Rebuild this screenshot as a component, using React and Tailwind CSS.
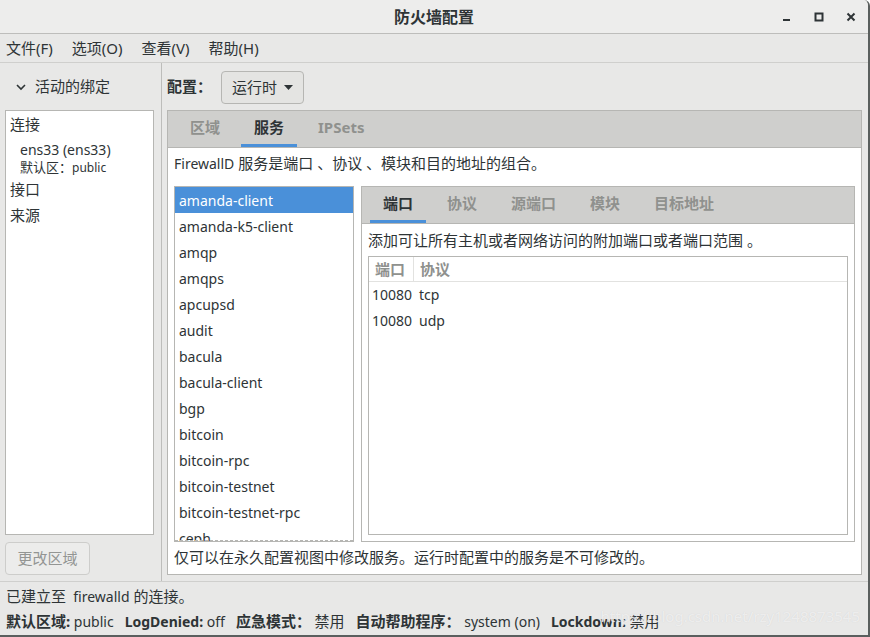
import { useState } from "react";

const services = [
  "amanda-client",
  "amanda-k5-client",
  "amqp",
  "amqps",
  "apcupsd",
  "audit",
  "bacula",
  "bacula-client",
  "bgp",
  "bitcoin",
  "bitcoin-rpc",
  "bitcoin-testnet",
  "bitcoin-testnet-rpc",
  "ceph",
];

const ports = [
  { port: "10080", proto: "tcp" },
  { port: "10080", proto: "udp" },
];

function Tab({ label, active }) {
  return (
    <div
      className={`h-full flex items-center px-[13px] border-b-[3px] font-bold ${
        active ? "border-[#4a90d9] text-[#2e3436]" : "border-transparent text-[#8f918e]"
      }`}
    >
      {label}
    </div>
  );
}

export default function App() {
  const [selected, setSelected] = useState("amanda-client");

  return (
    <div
      className="relative w-[870px] h-[637px] overflow-hidden bg-[#e8e8e7] text-[14px] text-[#2e3436] flex flex-col border-r-2 border-b-2 border-[#5a5f5e] rounded-tr-[6px]"
      style={{ fontFamily: '"Noto Sans", "Noto Sans CJK SC", sans-serif' }}
    >
      {/* title bar */}
      <div className="h-[34px] shrink-0 bg-[#ededec] border-b border-[#bdbdbb] flex items-center relative">
        <div className="flex-1 text-center text-[16px] font-bold text-[#2e3436]">防火墙配置</div>
        <div className="absolute right-[12px] top-0 h-full flex items-center gap-[22px]">
          <svg width="10" height="10" viewBox="0 0 10 10">
            <rect x="1" y="7" width="7" height="2" fill="#2e3436" />
          </svg>
          <svg width="10" height="10" viewBox="0 0 10 10">
            <rect x="1.5" y="1.5" width="7" height="7" fill="none" stroke="#2e3436" strokeWidth="2" />
          </svg>
          <svg width="10" height="10" viewBox="0 0 10 10">
            <path d="M1.5 1.5 L8.5 8.5 M8.5 1.5 L1.5 8.5" stroke="#2e3436" strokeWidth="2" />
          </svg>
        </div>
      </div>

      {/* menu bar */}
      <div className="h-[29px] shrink-0 border-b border-[#cfcfcd] flex items-center pl-[6px] gap-[19px] text-[15px]">
        <span>文件(F)</span>
        <span>选项(O)</span>
        <span>查看(V)</span>
        <span>帮助(H)</span>
      </div>

      {/* main */}
      <div className="flex flex-1 min-h-0 border-b border-[#cfcfcd]">
        {/* left pane */}
        <div className="w-[162px] shrink-0 border-r border-[#bdbdbb] flex flex-col pl-[5px] pr-[7px]">
          <div className="h-[47px] shrink-0 flex items-center pl-[10px] gap-[8px] text-[15px]">
            <svg width="12" height="12" viewBox="0 0 12 12">
              <path d="M2 4 L6 8 L10 4" fill="none" stroke="#2e3436" strokeWidth="1.6" />
            </svg>
            <span>活动的绑定</span>
          </div>
          <div className="h-[425px] bg-white border border-[#b6b6b3] flex flex-col pt-[2px]">
            <div className="h-[23px] flex items-center pl-[4px] text-[15px]">连接</div>
            <div className="pl-[14px] pt-[5px]">
              <div className="leading-[17px]">ens33 (ens33)</div>
              <div className="text-[12px] leading-[17px] mt-[1px]">
                <span className="text-[13px]">默认区：</span>public
              </div>
            </div>
            <div className="h-[26px] flex items-center pl-[4px] text-[15px]">接口</div>
            <div className="h-[26px] flex items-center pl-[4px] text-[15px]">来源</div>
          </div>
          <div className="mt-[7px] w-[85px] h-[33px] rounded-[4px] border border-[#cdcdcb] bg-[#ececeb] flex items-center justify-center text-[#939593] text-[15px]">
            更改区域
          </div>
        </div>

        {/* right pane */}
        <div className="flex-1 flex flex-col pl-[5px] pr-[6px]">
          <div className="h-[47px] shrink-0 flex items-center gap-[9px] text-[15px]">
            <span className="font-bold">配置：</span>
            <div className="h-[33px] w-[83px] mt-[2px] rounded-[4px] border border-[#b6b6b3] bg-[#e4e4e2] flex items-center justify-center gap-[7px]">
              <span>运行时</span>
              <svg width="9" height="6" viewBox="0 0 9 6">
                <path d="M0 0 L9 0 L4.5 5 Z" fill="#2e3436" />
              </svg>
            </div>
          </div>

          {/* notebook */}
          <div className="h-[465px] border border-[#b6b6b3] flex flex-col">
            <div className="h-[37px] shrink-0 bg-[#cfcfcd] border-b border-[#b6b6b3] flex items-stretch pl-[9px] gap-[8px] text-[15px]">
              <Tab label="区域" />
              <Tab label="服务" active />
              <Tab label="IPSets" />
            </div>
            <div className="flex-1 bg-white flex flex-col px-[6px]">
              <div className="h-[30px] flex items-center">
                FirewallD <span className="text-[15px] ml-[4px]">服务是端口 、协议 、模块和目的地址的组合。</span>
              </div>
              <div className="flex gap-[7px] mt-[8px] h-[356px]">
                {/* services list */}
                <div className="relative w-[180px] shrink-0 border border-[#b6b6b3] overflow-hidden">
                  {services.map((s) => (
                    <div
                      key={s}
                      onClick={() => setSelected(s)}
                      className={`h-[26px] flex items-center pl-[4px] ${
                        selected === s ? "bg-[#4a90d9] text-white" : ""
                      }`}
                    >
                      {s}
                    </div>
                  ))}
                  <div className="absolute left-0 right-0 bottom-0 border-b border-dashed border-[#b6b6b3]" />
                </div>

                {/* inner notebook */}
                <div className="flex-1 border border-[#b6b6b3] flex flex-col">
                  <div className="h-[37px] shrink-0 bg-[#cfcfcd] border-b border-[#b6b6b3] flex items-stretch pl-[8px] gap-[8px] text-[15px]">
                    <Tab label="端口" active />
                    <Tab label="协议" />
                    <Tab label="源端口" />
                    <Tab label="模块" />
                    <Tab label="目标地址" />
                  </div>
                  <div className="flex-1 flex flex-col px-[6px] pb-[6px]">
                    <div className="h-[32px] flex items-center text-[15px]">添加可让所有主机或者网络访问的附加端口或者端口范围 。</div>
                    <div className="flex-1 border border-[#b6b6b3]">
                      <div className="h-[25px] flex items-center border-b border-[#e2e2e0] text-[#8f918e] font-bold text-[15px]">
                        <div className="w-[45px] h-full flex items-center pl-[6px] border-r border-[#e2e2e0]">端口</div>
                        <div className="pl-[6px]">协议</div>
                      </div>
                      <div className="-mt-[1px]">
                        {ports.map((p) => (
                          <div key={p.proto} className="h-[26px] flex items-center pl-[3px]">
                            <span className="w-[47px]">{p.port}</span>
                            <span>{p.proto}</span>
                          </div>
                        ))}
                      </div>
                    </div>
                  </div>
                </div>
              </div>
              <div className="h-[30px] flex items-center text-[15px]">仅可以在永久配置视图中修改服务。运行时配置中的服务是不可修改的。</div>
            </div>
          </div>
        </div>
      </div>

      {/* status */}
      <div className="h-[53px] shrink-0 flex flex-col pl-[6px]">
        <div className="h-[27px] flex items-center pt-[1px]">
          <span className="text-[15px]">已建立至</span>&nbsp;&nbsp;firewalld <span className="text-[15px] ml-[4px]">的连接。</span>
        </div>
        <div className="h-[25px] flex items-center gap-[11px] whitespace-nowrap">
          <span><b className="text-[15px]">默认区域:</b> public</span>
          <span><b>LogDenied:</b> off</span>
          <span><b className="text-[15px]">应急模式：</b> <span className="text-[15px]">禁用</span></span>
          <span><b className="text-[15px]">自动帮助程序：</b> system (on)</span>
          <span><b>Lockdown:</b> <span className="text-[15px]">禁用</span></span>
        </div>
      </div>

      <div className="absolute right-[8px] bottom-[8px] text-[15px] text-white/60 pointer-events-none" style={{ textShadow: "0 0 1px #d0d0d0" }}>
        https://blog.csdn.net/rzy1248873545
      </div>
    </div>
  );
}
